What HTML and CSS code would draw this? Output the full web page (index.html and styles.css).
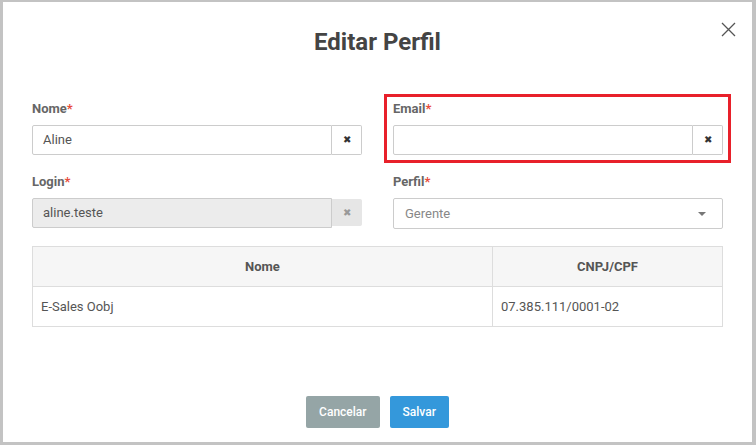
FILE: index.html
```html
<!DOCTYPE html>
<html lang="pt-BR">
<head>
	<meta charset="UTF-8">
	<title>Editar Perfil</title>
	<link rel="stylesheet" href="styles.css">
</head>
<body>
	<div class="modal">
		<h1 class="titulo">Editar Perfil</h1>
		<span class="fechar">
			<svg width="15" height="15" viewBox="0 0 15 15"><path d="M1 1L14 14M14 1L1 14" stroke="#555" stroke-width="1.3" fill="none"/></svg>
		</span>

		<div class="form">
			<div class="campo">
				<label>Nome<span class="obrig">*</span></label>
				<div class="grupo">
					<div class="entrada">Aline</div>
					<span class="limpar">&#x2716;</span>
				</div>
			</div>
			<div class="campo destaque">
				<label>Email<span class="obrig">*</span></label>
				<div class="grupo">
					<div class="entrada"></div>
					<span class="limpar">&#x2716;</span>
				</div>
			</div>
			<div class="campo">
				<label>Login<span class="obrig">*</span></label>
				<div class="grupo desativado">
					<div class="entrada">aline.teste</div>
					<span class="limpar">&#x2716;</span>
				</div>
			</div>
			<div class="campo">
				<label>Perfil<span class="obrig">*</span></label>
				<div class="selecao">
					<span>Gerente</span>
					<span class="seta"></span>
				</div>
			</div>
		</div>

		<table class="tabela">
			<tr>
				<th class="col1">Nome</th>
				<th>CNPJ/CPF</th>
			</tr>
			<tr>
				<td>E-Sales Oobj</td>
				<td>07.385.111/0001-02</td>
			</tr>
		</table>

		<div class="rodape">
			<button class="btn cancelar">Cancelar</button>
			<button class="btn salvar">Salvar</button>
		</div>
	</div>
</body>
</html>
```

FILE: styles.css
```css
*{
	padding: 0;
	margin: 0;
	box-sizing: border-box;
}
body{
	background: #c3c3c3;
	font-family: Roboto, "Liberation Sans", sans-serif;
	height: 445px;
	overflow: hidden;
}
.modal{
	position: relative;
	margin: 2px 4px 3px 3px;
	height: 440px;
	background: #fff;
	padding: 25px 29px 0;
}
.titulo{
	font-size: 24px;
	line-height: 30px;
	font-weight: bold;
	color: #444;
	text-align: center;
}
.fechar{
	position: absolute;
	top: 20px;
	right: 16px;
	width: 15px;
	height: 15px;
}
.fechar svg{
	display: block;
}
.form{
	display: grid;
	grid-template-columns: 330px 330px;
	column-gap: 31px;
	row-gap: 18px;
	margin-top: 43px;
}
.campo{
	position: relative;
}
.campo label{
	display: block;
	font-size: 13px;
	line-height: 18px;
	font-weight: bold;
	color: #666;
	margin-bottom: 7px;
}
.obrig{
	color: #e74c3c;
}
.destaque::after{
	content: "";
	position: absolute;
	top: -6px;
	left: -9px;
	right: -8px;
	bottom: -8px;
	border: 3px solid #e8202a;
}
.grupo{
	display: flex;
	height: 30px;
}
.entrada{
	flex: 1;
	border: 1px solid #ccc;
	border-radius: 2px 0 0 2px;
	padding: 0 10px;
	font-size: 13px;
	line-height: 28px;
	color: #555;
}
.limpar{
	width: 30px;
	border: 1px solid #ccc;
	border-left: none;
	border-radius: 0 2px 2px 0;
	font-size: 10px;
	line-height: 28px;
	text-align: center;
	color: #333;
}
.desativado .entrada{
	background: #ececec;
}
.desativado .limpar{
	background: #e6e6e6;
	border-color: #e6e6e6;
	color: #999;
	margin: 1px 0 2px;
	line-height: 26px;
}
.selecao{
	display: flex;
	align-items: center;
	justify-content: space-between;
	height: 31px;
	border: 1px solid #ccc;
	border-radius: 2px;
	padding: 0 16px 0 11px;
	font-size: 13px;
	color: #888;
}
.seta{
	width: 0;
	height: 0;
	border-left: 4px solid transparent;
	border-right: 4px solid transparent;
	border-top: 4px solid #777;
}
.tabela{
	width: 100%;
	margin-top: 17px;
	border-collapse: collapse;
	font-size: 13px;
	color: #555;
}
.tabela th, .tabela td{
	border: 1px solid #ddd;
	height: 40px;
}
.tabela th{
	background: #f6f6f6;
	font-weight: bold;
	text-align: center;
}
.tabela td{
	padding: 0 8px;
}
.col1{
	width: 460px;
}
.rodape{
	display: flex;
	justify-content: center;
	gap: 10px;
	margin-top: 69px;
}
.btn{
	height: 32px;
	border: none;
	border-radius: 2px;
	font-family: Roboto, "Liberation Sans", sans-serif;
	font-size: 12px;
	font-weight: 500;
	color: #fff;
	padding: 0 13px;
}
.cancelar{
	background: #95a5a6;
}
.salvar{
	background: #3498db;
}
```
